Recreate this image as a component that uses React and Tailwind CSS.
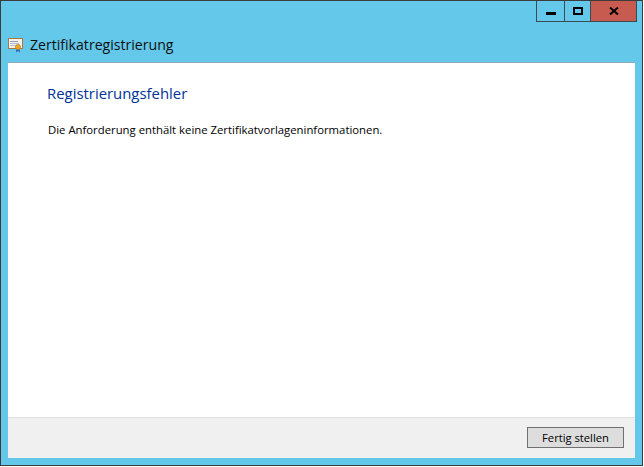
import React from 'react';

const CertIcon = () => (
  <svg width="16" height="16" viewBox="0 0 16 16" className="shrink-0">
    <rect x="0.5" y="1.5" width="14" height="10" fill="#f7f3ea" stroke="#a5793f" />
    <rect x="2" y="4" width="8" height="1" fill="#8f9fc4" />
    <rect x="2" y="6" width="9" height="1" fill="#b4bdd6" />
    <rect x="2" y="8" width="6" height="1" fill="#b4bdd6" />
    <path d="M8.5 11 L8 15.5 L10 14 L12 15.5 L11.5 11 Z" fill="#2a62c8" />
    <circle cx="10" cy="10" r="2.6" fill="#e8a62a" stroke="#b87a18" strokeWidth="0.6" />
  </svg>
);

export default function App() {
  return (
    <div className="w-[644px] h-[467px] bg-white font-['Open_Sans','Noto_Sans',sans-serif]">
      <div className="w-[643px] h-[466px] border border-[#3c3c3c] bg-[#63c8ea] flex flex-col">
        {/* Fensterknoepfe */}
        <div className="flex justify-end pr-[5px] h-[21px] shrink-0">
          <div className="flex h-[21px] border border-t-0 border-[#3c4a52]">
            <div className="w-[28px] flex items-center justify-center border-r border-[#3c4a52]">
              <div className="w-[10px] h-[3px] bg-black mt-[4px]" />
            </div>
            <div className="w-[26px] flex items-center justify-center border-r border-[#3c4a52]">
              <div className="w-[10px] h-[8px] border-2 border-black" />
            </div>
            <div className="w-[45px] flex items-center justify-center bg-[#c75b50]">
              <svg width="10" height="8" viewBox="0 0 10 8">
                <path d="M1 0.5 L9 7.5 M9 0.5 L1 7.5" stroke="black" strokeWidth="2" />
              </svg>
            </div>
          </div>
        </div>

        {/* Titel */}
        <div className="flex items-center h-[40px] pt-[5px] pl-[7px] gap-[6px] shrink-0">
          <CertIcon />
          <span className="text-[14.1px] leading-[20px] text-[#111]">Zertifikatregistrierung</span>
        </div>

        {/* Inhalt */}
        <div className="mx-[7px] flex-1 bg-white flex flex-col border-t border-[#8fa9b8]">
          <div className="flex-1 pl-[38px] pt-[20px]">
            <h1 className="text-[14.9px] leading-[20px] text-[#003399] ml-[1px]">Registrierungsfehler</h1>
            <p className="text-[11.33px] leading-[16px] text-black ml-[2px] mt-[19px]">
              Die Anforderung enthält keine Zertifikatvorlageninformationen.
            </p>
          </div>
          <div className="h-[41px] bg-[#f0f0f0] border-t border-[#dfdfdf] flex justify-end items-start pt-[9px] pr-[11px]">
            <button className="w-[97px] h-[21px] bg-[#dddddd] border border-[#707070] text-[11.2px] text-black leading-none">
              Fertig stellen
            </button>
          </div>
        </div>
        <div className="h-[7px] shrink-0" />
      </div>
    </div>
  );
}
